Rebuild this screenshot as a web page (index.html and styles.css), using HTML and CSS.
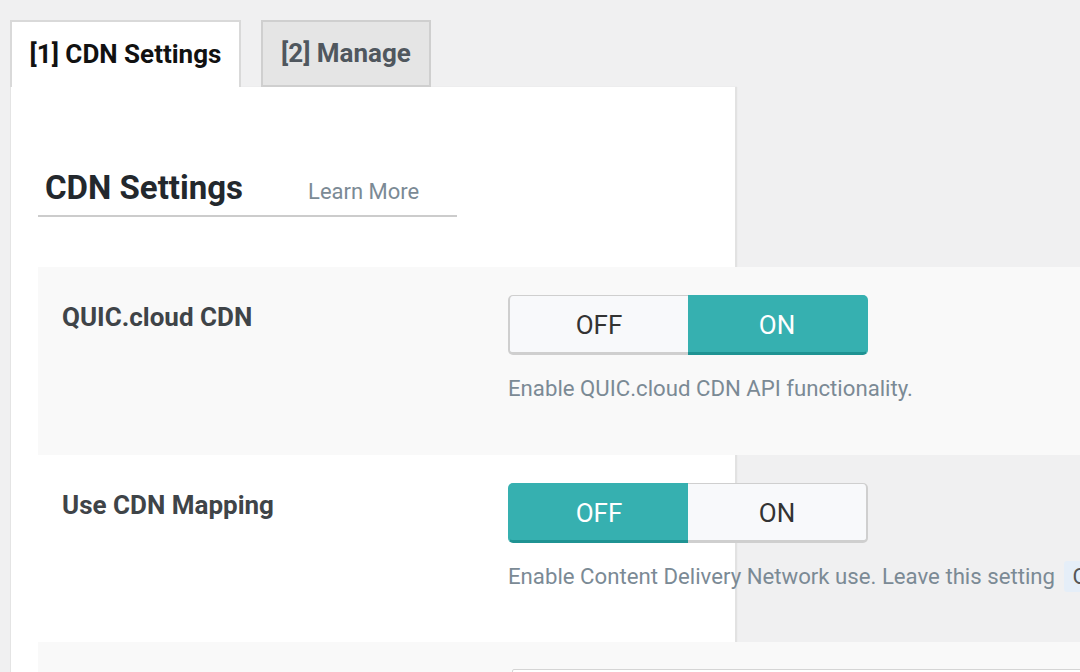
FILE: index.html
```html
<!DOCTYPE html>
<html>
<head>
<meta charset="utf-8">
<link rel="stylesheet" href="styles.css">
</head>
<body>
<div class="tabs">
  <div class="tab active">[1] CDN Settings</div>
  <div class="tab second">[2] Manage</div>
</div>
<div class="panel">
  <div class="heading">
    <h3 class="title">CDN Settings</h3>
    <a class="learn">Learn More</a>
  </div>
  <div class="table">
    <div class="row striped">
      <div class="label">QUIC.cloud CDN</div>
      <div class="field">
        <div class="toggle">
          <span class="opt off">OFF</span><span class="opt on sel">ON</span>
        </div>
        <p class="desc">Enable QUIC.cloud CDN API functionality.</p>
      </div>
    </div>
    <div class="row">
      <div class="label">Use CDN Mapping</div>
      <div class="field">
        <div class="toggle">
          <span class="opt off sel">OFF</span><span class="opt on">ON</span>
        </div>
        <p class="desc">Enable Content Delivery Network use. Leave this setting <code class="code">OFF</code></p>
      </div>
    </div>
    <div class="row striped last">
      <div class="label"></div>
      <div class="field">
        <div class="input"></div>
      </div>
    </div>
  </div>
</div>
</body>
</html>
```
FILE: styles.css
```css
html, body {
  margin: 0;
  padding: 0;
}
body {
  background: #f0f0f1;
  font-family: Roboto, "Liberation Sans", sans-serif;
  width: 1080px;
  height: 672px;
  overflow: hidden;
}
.tabs {
  display: flex;
  gap: 20px;
  padding: 20px 0 0 10px;
}
.tab {
  width: 231px;
  height: 67px;
  box-sizing: border-box;
  text-align: center;
  font-size: 26px;
  font-weight: 700;
  line-height: 63px;
  color: #50575e;
  background: #e5e5e5;
  border: 2px solid #cfcfcf;
}
.tab.second {
  width: 170px;
}
.tab.active {
  background: #fff;
  color: #111;
  border-color: #d9d9d9;
  border-bottom: none;
  line-height: 65px;
}
.panel {
  margin-left: 10px;
  width: 725px;
  height: 600px;
  background: #fff;
  border-left: 1px solid #e4e4e4;
  box-sizing: border-box;
  box-shadow: 2px 0 1px #e2e2e2;
  padding: 0 0 0 27px;
}
.heading {
  display: flex;
  align-items: baseline;
  width: 419px;
  border-bottom: 2px solid #cccccc;
  padding: 83px 0 0 7px;
  box-sizing: border-box;
  height: 130px;
}
.title {
  margin: 0;
  font-size: 33px;
  font-weight: 700;
  color: #23282d;
  line-height: 36px;
}
.learn {
  margin-left: 65px;
  font-size: 22px;
  color: #7b8a95;
}
.table {
  margin-top: 50px;
  width: 1100px;
}
.row {
  display: flex;
  padding: 28px 0 0;
  height: 187px;
  box-sizing: border-box;
}
.row.striped {
  background: #f9f9f9;
  height: 188px;
}
.label {
  width: 446px;
  padding-left: 24px;
  flex: none;
  font-size: 26px;
  font-weight: 700;
  color: #3f4448;
  line-height: 30px;
  padding-top: 7px;
}
.field {
  flex: 1;
}
.toggle {
  display: flex;
  width: 360px;
  height: 60px;
}
.opt {
  width: 180px;
  height: 60px;
  box-sizing: border-box;
  display: flex;
  align-items: center;
  justify-content: center;
  font-size: 26px;
  color: #333;
  background: #f8f9fb;
  border: 2px solid #cfcfcf;
  border-top-width: 1px;
  border-bottom-width: 3px;
  padding-top: 1px;
}
.opt.off {
  border-radius: 5px 0 0 5px;
  border-right: none;
}
.opt.on {
  border-radius: 0 5px 5px 0;
  border-left: none;
}
.opt.sel {
  background: #36b0b0;
  color: #fff;
  border-color: #36b0b0;
  border-bottom-color: #1f9393;
}
.desc {
  margin: 18px 0 0;
  font-size: 22.2px;
  line-height: 30px;
  color: #7b8a95;
  white-space: nowrap;
}
.code {
  font-family: Roboto, "Liberation Sans", sans-serif;
  font-size: 22px;
  background: #e5eef8;
  color: #555;
  padding: 3px 9px;
  border-radius: 3px;
  margin-left: 3px;
}
.input {
  margin: -1px 0 0 4px;
  height: 40px;
  border: 1px solid #d5d5d5;
  border-radius: 2px;
  background: #fff;
}
```
